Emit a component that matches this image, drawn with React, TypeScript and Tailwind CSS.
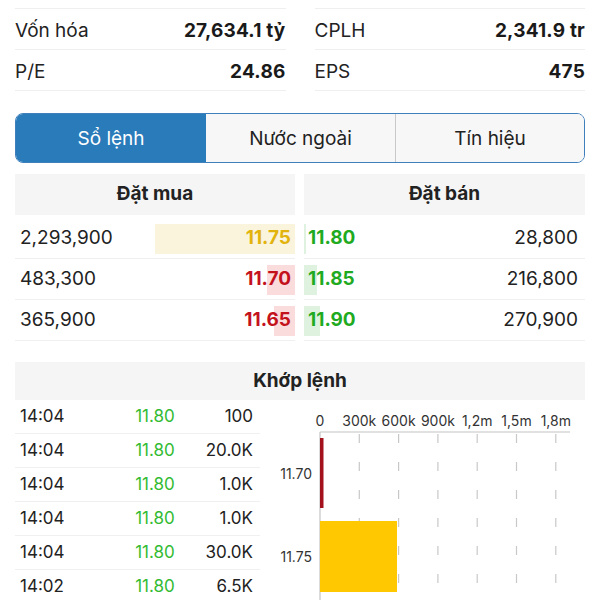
import React from 'react';

const stats = [
  [
    { label: 'Vốn hóa', value: '27,634.1 tỷ' },
    { label: 'P/E', value: '24.86' },
  ],
  [
    { label: 'CPLH', value: '2,341.9 tr' },
    { label: 'EPS', value: '475' },
  ],
];

const bids = [
  { qty: '2,293,900', price: '11.75', color: 'text-[#e2b30c]', bg: 'bg-[#faf4dc]', w: 140 },
  { qty: '483,300', price: '11.70', color: 'text-[#c4121d]', bg: 'bg-[#fbdcdc]', w: 28 },
  { qty: '365,900', price: '11.65', color: 'text-[#c4121d]', bg: 'bg-[#fbdcdc]', w: 21 },
];

const asks = [
  { qty: '28,800', price: '11.80', w: 2 },
  { qty: '216,800', price: '11.85', w: 13 },
  { qty: '270,900', price: '11.90', w: 16 },
];

const trades = [
  { time: '14:04', price: '11.80', vol: '100' },
  { time: '14:04', price: '11.80', vol: '20.0K' },
  { time: '14:04', price: '11.80', vol: '1.0K' },
  { time: '14:04', price: '11.80', vol: '1.0K' },
  { time: '14:04', price: '11.80', vol: '30.0K' },
  { time: '14:02', price: '11.80', vol: '6.5K' },
];

const ticks = ['0', '300k', '600k', '900k', '1,2m', '1,5m', '1,8m'];

function VolumeChart() {
  const x0 = 50;
  const step = 39.3;
  return (
    <svg width="315" height="200" viewBox="0 0 315 200" className="block">
      {ticks.map((t, i) => (
        <text
          key={t}
          x={x0 + i * step}
          y={26}
          textAnchor="middle"
          fontSize="14"
          fill="#333"
          fontFamily="Inter, sans-serif"
        >
          {t}
        </text>
      ))}
      <line x1={x0} y1={32} x2={300} y2={32} stroke="#c4c4c4" strokeWidth="1.2" />
      <line x1={x0} y1={32} x2={x0} y2={200} stroke="#c4c4c4" strokeWidth="1.2" />
      {ticks.slice(1).map((t, i) => (
        <line
          key={t}
          x1={x0 + (i + 1) * step}
          y1={34}
          x2={x0 + (i + 1) * step}
          y2={196}
          stroke="#c8c8c8"
          strokeWidth="1.2"
          strokeDasharray="9 19"
        />
      ))}
      <rect x={x0} y={38} width={3.5} height={70} fill="#a3111d" />
      <rect x={x0} y={121} width={77} height={71} fill="#ffc800" />
      <text x={42} y={79} textAnchor="end" fontSize="14" fill="#333" fontFamily="Inter, sans-serif">
        11.70
      </text>
      <text x={42} y={162} textAnchor="end" fontSize="14" fill="#333" fontFamily="Inter, sans-serif">
        11.75
      </text>
    </svg>
  );
}

export default function App() {
  return (
    <div className="w-[600px] h-[600px] overflow-hidden bg-white px-[15px] font-['Inter',sans-serif] text-[#222]">
      {/* thông tin cơ bản */}
      <div className="flex gap-[29px]">
        {stats.map((col, ci) => (
          <div key={ci} className="flex-1">
            <div className="h-[9px] border-b border-[#efefef]" />
            {col.map(s => (
              <div key={s.label} className="flex items-center justify-between h-[41px] pt-[5px] border-b border-[#efefef]">
                <span className="text-[19px]">{s.label}</span>
                <span className="text-[19px] font-bold text-[#1a1a1a] tracking-[0.2px]">{s.value}</span>
              </div>
            ))}
          </div>
        ))}
      </div>

      {/* tabs */}
      <div className="mt-[22px] flex h-[50px] rounded-[8px] border-[1.5px] border-[#3f7fbb] overflow-hidden">
        <div className="w-[190px] flex items-center justify-center pt-[2px] bg-[#2a7bba] text-white text-[19px]">
          Sổ lệnh
        </div>
        <div className="w-[190px] flex items-center justify-center pt-[2px] bg-[#f7f7f7] text-[19px] border-r border-[#c9c9c9]">
          Nước ngoài
        </div>
        <div className="flex-1 flex items-center justify-center pt-[2px] bg-[#f7f7f7] text-[19px]">Tín hiệu</div>
      </div>

      {/* sổ lệnh */}
      <div className="mt-[11px] flex gap-[9px]">
        <div className="w-[280px]">
          <div className="h-[41px] mb-[3px] bg-[#f5f5f5] flex items-center justify-center text-[19px] font-bold">Đặt mua</div>
          {bids.map(b => (
            <div key={b.price} className="relative flex items-center justify-between h-[41px] pl-[5px] pr-[4px] border-b border-[#f0f0f0]">
              <div className={`absolute right-0 top-[6px] bottom-[4px] ${b.bg}`} style={{ width: b.w }} />
              <span className="relative text-[19px]">{b.qty}</span>
              <span className={`relative text-[19px] font-bold ${b.color}`}>{b.price}</span>
            </div>
          ))}
        </div>
        <div className="flex-1">
          <div className="h-[41px] mb-[3px] bg-[#f5f5f5] flex items-center justify-center text-[19px] font-bold">Đặt bán</div>
          {asks.map(a => (
            <div key={a.price} className="relative flex items-center justify-between h-[41px] pl-[4px] pr-[7px] border-b border-[#f0f0f0]">
              <div className="absolute left-0 top-[6px] bottom-[4px] bg-[#dff1df]" style={{ width: a.w }} />
              <span className="relative text-[19px] font-bold text-[#1faa1f]">{a.price}</span>
              <span className="relative text-[19px]">{a.qty}</span>
            </div>
          ))}
        </div>
      </div>

      {/* khớp lệnh */}
      <div className="mt-[21px] h-[38px] bg-[#f5f5f5] flex items-center justify-center text-[19px] font-bold">
        Khớp lệnh
      </div>
      <div className="flex">
        <div className="w-[245px]">
          {trades.map((t, i) => (
            <div key={i} className="flex items-center h-[34px] pl-[5px] pr-[7px] border-b border-[#f0f0f0] text-[17px]">
              <span className="w-[105px]">{t.time}</span>
              <span className="w-[60px] text-center text-[#33bb33]">{t.price}</span>
              <span className="flex-1 text-right">{t.vol}</span>
            </div>
          ))}
        </div>
        <div className="ml-[10px]">
          <VolumeChart />
        </div>
      </div>
    </div>
  );
}
